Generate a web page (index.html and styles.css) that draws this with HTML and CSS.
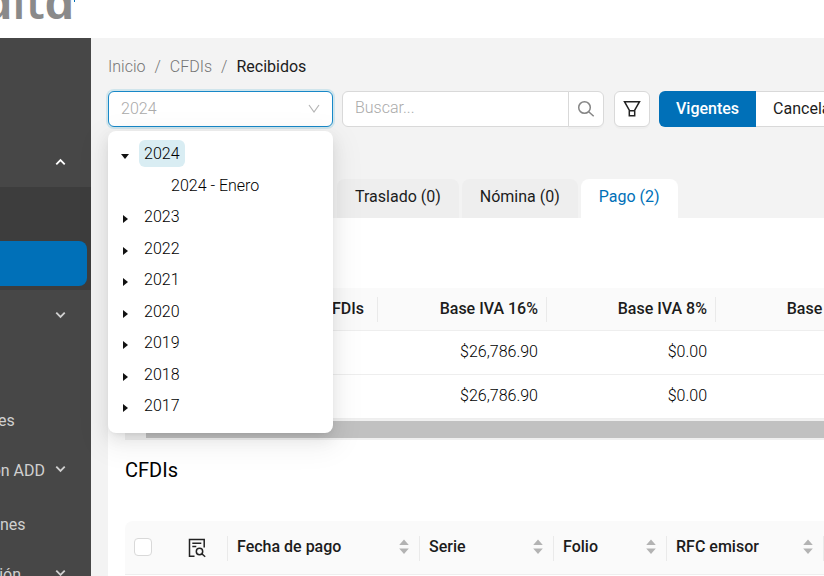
FILE: index.html
```html
<!DOCTYPE html>
<html lang="es">
<head>
<meta charset="utf-8">
<title>CFDIs Recibidos</title>
<link rel="stylesheet" href="styles.css">
</head>
<body>
<svg class="defs" aria-hidden="true">
  <symbol id="chevron" viewBox="0 0 12 8"><path d="M1.4 1.4 6 6l4.600-4.600" fill="none" stroke="currentColor" stroke-width="2"/></symbol>
  <symbol id="sorter" viewBox="0 0 10 16"><path d="M5 .5 9.800 6H.2zM.2 9.500h9.600L5 15z" fill="#b3b3b3"/></symbol>
</svg>
<header class="topbar"><span class="logo">ɑltɑ<i class="logo-mark"></i></span></header>
<div class="shell">
  <nav class="sidebar" aria-label="Menú">
    <div class="group group-first">
      <button class="item title" aria-label="Contraer"><svg class="chev up"><use href="#chevron"/></svg></button>
    </div>
    <div class="submenu"><a class="active" href="#" aria-label="Recibidos"></a></div>
    <button class="item title" aria-label="Expandir"><svg class="chev"><use href="#chevron"/></svg></button>
    <div class="item"></div>
    <a class="item plain" href="#"><span class="end-es">es</span></a>
    <button class="item title"><span>ón ADD</span><svg class="chev"><use href="#chevron"/></svg></button>
    <a class="item plain" href="#"><span>nes</span></a>
    <button class="item title"><span class="end-cion">ción</span><svg class="chev"><use href="#chevron"/></svg></button>
  </nav>
  <main class="main">
    <nav class="crumbs" aria-label="Ruta"><a href="#">Inicio</a><i>/</i><a href="#">CFDIs</a><i>/</i><span>Recibidos</span></nav>
    <div class="toolbar">
      <div class="period">
        <select class="period-select" aria-label="Periodo"><option>2024</option></select>
        <svg class="period-arrow" viewBox="0 0 12 12"><path d="M1 2l5 7 5-7" fill="none" stroke="#b5b5b5" stroke-width="1.2"/></svg>
        <ul class="tree" role="tree">
          <li role="treeitem"><i class="caret open"></i><span class="selected">2024</span></li>
          <li role="treeitem" class="child"><span>2024 - Enero</span></li>
          <li role="treeitem"><i class="caret"></i><span>2023</span></li>
          <li role="treeitem"><i class="caret"></i><span>2022</span></li>
          <li role="treeitem"><i class="caret"></i><span>2021</span></li>
          <li role="treeitem"><i class="caret"></i><span>2020</span></li>
          <li role="treeitem"><i class="caret"></i><span>2019</span></li>
          <li role="treeitem"><i class="caret"></i><span>2018</span></li>
          <li role="treeitem"><i class="caret"></i><span>2017</span></li>
        </ul>
      </div>
      <div class="search">
        <input type="text" placeholder="Buscar..." aria-label="Buscar">
        <button aria-label="Buscar"><svg width="18" height="18" viewBox="0 0 18 18" fill="none" stroke="#858585" stroke-width="1.500"><circle cx="7.500" cy="7.500" r="5.800"/><path d="M11.700 11.700l5 4.600"/></svg></button>
      </div>
      <button class="filter" aria-label="Filtrar"><svg width="18" height="18" viewBox="0 0 18 18" fill="none" stroke="#222" stroke-width="1.500"><path d="M1.500 1.700h15l-4.800 8.500v5.600H6.300v-5.600zM6.300 10.700h5.400"/></svg></button>
      <div class="segmented"><button class="on">Vigentes</button><button>Cancelados</button></div>
    </div>
    <div class="tabs" role="tablist">
      <button role="tab">Traslado (0)</button>
      <button role="tab">Nómina (0)</button>
      <button role="tab" class="current" aria-selected="true">Pago (2)</button>
    </div>
    <section class="panel">
      <div class="scroller">
        <table class="summary">
          <colgroup><col class="s-first"><col class="s-tax"><col class="s-tax"><col class="s-tax"></colgroup>
          <thead><tr><th>CFDIs</th><th>Base IVA 16%</th><th>Base IVA 8%</th><th>Base IVA 0%</th></tr></thead>
          <tbody>
            <tr><td></td><td>$26,786.90</td><td>$0.00</td><td></td></tr>
            <tr><td></td><td>$26,786.90</td><td>$0.00</td><td></td></tr>
          </tbody>
        </table>
        <div class="bar"><i class="bar-arrow"></i><i class="bar-thumb"></i></div>
      </div>
      <h2>CFDIs</h2>
      <div class="scroller">
        <table class="list">
          <colgroup><col class="l-check"><col class="l-icon"><col class="l-date"><col class="l-serie"><col class="l-folio"><col class="l-rfc"></colgroup>
          <thead><tr>
            <th class="bare"><input type="checkbox" aria-label="Seleccionar todo"></th>
            <th class="center"><svg width="18" height="20" viewBox="0 0 18 20" fill="none" stroke="#222" stroke-width="1.500"><path d="M6.500 18.200H1.500V1.500h14.700v8M4.300 5.200h9M4.300 8.500h4"/><circle cx="11.500" cy="13.500" r="3.200"/><path d="M13.800 15.800l3.400 3"/></svg></th>
            <th><div>Fecha de pago<svg class="sort"><use href="#sorter"/></svg></div></th>
            <th><div>Serie<svg class="sort"><use href="#sorter"/></svg></div></th>
            <th><div>Folio<svg class="sort"><use href="#sorter"/></svg></div></th>
            <th><div>RFC emisor<svg class="sort"><use href="#sorter"/></svg></div></th>
          </tr></thead>
        </table>
      </div>
    </section>
  </main>
</div>
</body>
</html>
```
FILE: styles.css
```css
* { box-sizing: border-box; }
body {
  margin: 0;
  height: 100vh;
  display: flex;
  flex-direction: column;
  overflow: hidden;
  font: 16px/24px Roboto, "Liberation Sans", sans-serif;
  color: #1c1c1c;
  background: #f3f3f3;
}
button, input, select { font: inherit; color: inherit; }
button { margin: 0; padding: 0; border: 0; background: none; cursor: pointer; }
a { color: inherit; text-decoration: none; }
.defs { display: none; }

.topbar {
  flex: none;
  height: 38px;
  background: #fff;
  overflow: hidden;
  display: flex;
  align-items: flex-end;
}
.logo {
  display: flex;
  align-items: flex-start;
  width: 75px;
  justify-content: flex-end;
  padding-bottom: 14px;
  font: 600 48px/46px "Open Sans", sans-serif;
  color: #8a8a8a;
}
.logo-mark { flex: none; width: 1px; height: 24px; background: #0070b8; }

.shell { flex: 1; display: flex; min-height: 0; }

.sidebar {
  flex: none;
  width: 91px;
  overflow: hidden;
  background: #474747;
  color: #d0d0d0;
}
.item {
  width: 100%;
  height: 50px;
  display: flex;
  align-items: center;
  justify-content: flex-end;
  white-space: nowrap;
}
.item span { padding-top: 3px; }
.title { gap: 10px; padding-right: 25px; }
.plain { margin-top: 4px; justify-content: flex-start; }
.end-cion { margin-right: 24px; }
.end-es { margin-left: -2px; }
.chev { width: 11px; height: 8px; flex: none; }
.up { transform: rotate(180deg); color: #fff; }
.group-first { padding-top: 99px; }
.submenu { height: 103px; padding: 54px 4px 4px 0; background: #3d3d3d; }
.active { display: block; height: 45px; border-radius: 0 8px 8px 0; background: #0070b8; }

.main {
  flex: 1;
  min-width: 0;
  padding: 17px 0 0 17px;
  display: flex;
  flex-direction: column;
}
.crumbs { display: flex; gap: 9px; color: #757575; font-weight: 300; }
.crumbs i { font-style: normal; }
.crumbs span { color: #1c1c1c; font-weight: 400; }

.toolbar { display: flex; gap: 9px; margin-top: 12px; height: 36px; }
.period { position: relative; flex: none; width: 225px; }
.period-select {
  appearance: none;
  width: 100%;
  height: 36px;
  padding: 0 12px;
  border: 1px solid #1888c8;
  border-radius: 6px;
  outline: 0;
  background: #fff;
  color: #aaa;
  font-weight: 300;
  box-shadow: 0 0 0 2px #d0e5ec;
}
.period-arrow { position: absolute; right: 13px; top: 12px; width: 12px; height: 12px; pointer-events: none; }
.tree {
  position: absolute;
  z-index: 2;
  top: 40px;
  left: 0;
  width: 100%;
  height: 302px;
  margin: 0;
  padding: 9px 12px 14px;
  list-style: none;
  display: flex;
  flex-direction: column;
  justify-content: space-between;
  border-radius: 8px;
  background: #fff;
  color: #000;
  font-weight: 300;
  box-shadow: 0 6px 16px rgba(0,0,0,.08), 0 3px 6px -4px rgba(0,0,0,.12), 0 9px 28px 8px rgba(0,0,0,.05);
}
.tree li { display: flex; align-items: center; gap: 9px; height: 27px; }
.tree span { padding: 0 5px; border-radius: 6px; line-height: 27px; }
.tree .selected { background: #d9edf3; }
.tree .child { padding-left: 46px; }
.caret { display: grid; place-items: center; width: 10px; height: 10px; margin-top: 5px; }
.caret::before { content: ""; border: solid transparent; border-width: 4px 0 4px 5px; border-left-color: #111; }
.caret.open::before { border-width: 5px 4px 0; border-color: #111 transparent; }

.search { display: flex; flex: none; width: 262px; }
.search input {
  flex: 1;
  min-width: 0;
  padding: 0 12px 2px;
  border: 1px solid #d9d9d9;
  border-radius: 6px 0 0 6px;
  outline: 0;
  font-weight: 300;
  background: #fff;
}
.search input::placeholder { color: #aaa; }
.search button, .filter {
  display: grid;
  place-items: center;
  flex: none;
  width: 36px;
  border: 1px solid #d9d9d9;
  background: #fff;
  box-shadow: 0 2px 0 rgba(0,0,0,.02);
}
.search button { margin-left: -1px; border-radius: 0 6px 6px 0; }
.filter { border-radius: 6px; margin-left: 1px; }
.segmented { flex: 1; min-width: 0; display: flex; overflow: hidden; }
.segmented button { flex: none; padding: 0 17px; border: 1px solid #d9d9d9; border-left: 0; background: #fff; }
.segmented .on { border: 0; border-radius: 6px 0 0 6px; background: #0070b8; color: #fff; font-weight: 500; }

.tabs { display: flex; gap: 3px; margin-top: 52px; padding-left: 229px; }
.tabs button { height: 39px; padding: 0 18px 3px; border-radius: 8px 8px 0 0; background: #eee; white-space: nowrap; }
.tabs .current { background: #fff; color: #0070b8; }

.panel { flex: 1; padding: 70px 0 0 17px; background: #fff; }
.scroller { overflow: hidden; }
table { border-collapse: separate; border-spacing: 0; table-layout: fixed; background: #fff; }
th { position: relative; font-weight: 500; background: #fafafa; white-space: nowrap; }
th, td { padding: 0 9px; border-bottom: 1px solid #eee; }
th::after {
  content: "";
  position: absolute;
  right: 0;
  top: 50%;
  width: 1px;
  height: 25px;
  margin-top: -12px;
  background: #eaeaea;
}
.bare::after { display: none; }

.summary { width: 760px; text-align: right; }
.summary th { height: 43px; }
.summary td { height: 44px; padding-bottom: 2px; font-weight: 300; color: #000; }
.summary tr > :first-child { padding-right: 14px; }
.s-first { width: 253px; }
.s-tax { width: 169px; }
.bar { display: flex; align-items: center; height: 21px; background: #f0f0f0; }
.bar-arrow { width: 21px; }
.bar-thumb { flex: 1; height: 17px; background: #c1c1c1; }

h2 { margin: 16px 0 37px; font-size: 20px; line-height: 28px; font-weight: 400; color: #000; }

.list { width: 699px; text-align: left; }
.list th { height: 54px; padding: 0 11px 1px 9px; }
.list th:first-child { border-top-left-radius: 8px; }
.list .center { padding: 0 0 1px; text-align: center; }
.list th > div { display: flex; align-items: center; justify-content: space-between; padding-bottom: 1px; }
.list svg { display: inline-block; vertical-align: middle; }
.list .sort { width: 10px; height: 16px; }
.list input {
  appearance: none;
  display: block;
  width: 18px;
  height: 18px;
  margin: 0;
  border: 1px solid #d9d9d9;
  border-radius: 4px;
  background: #fff;
}
.l-check { width: 40px; }
.l-icon { width: 63px; }
.l-date { width: 192px; }
.l-serie { width: 134px; }
.l-folio { width: 113px; }
.l-rfc { width: 157px; }
```
